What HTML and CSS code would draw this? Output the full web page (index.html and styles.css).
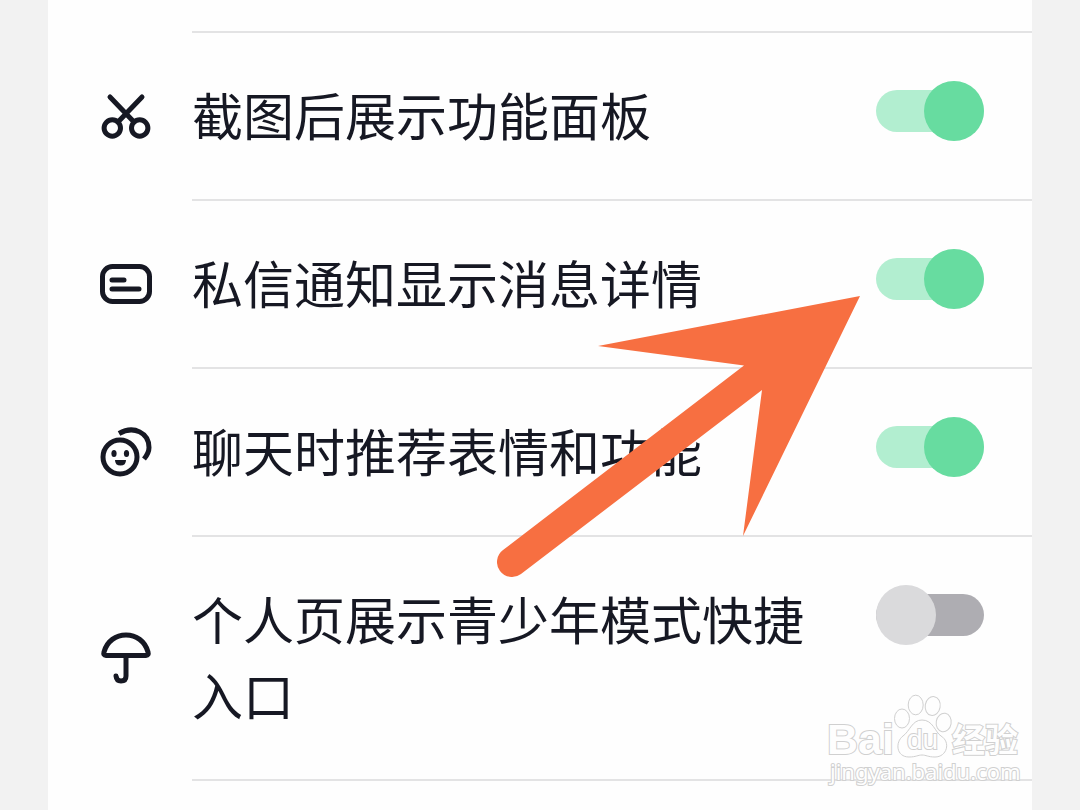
FILE: index.html
```html
<!DOCTYPE html>
<html lang="zh-CN">
<head>
<meta charset="utf-8">
<meta name="viewport" content="width=device-width, initial-scale=1">
<title>设置</title>
<link rel="stylesheet" href="styles.css">
</head>
<body>
<main class="panel">
  <ul class="settings">
    <li class="row">
      <svg class="icon" viewBox="0 0 56 56" aria-hidden="true"><path d="M12 9 36 34M44 9 20 34"/><circle cx="14.300" cy="40" r="8.200"/><circle cx="41.700" cy="40" r="8.200"/></svg>
      <div class="body">
        <label class="label" for="panel">截图后展示功能面板</label>
        <input class="switch" type="checkbox" role="switch" id="panel" checked>
      </div>
    </li>
    <li class="row">
      <svg class="icon" viewBox="0 0 56 56" aria-hidden="true"><rect x="4.500" y="9.500" width="47" height="35" rx="10"/><path d="M14 23H26M14 32H41"/></svg>
      <div class="body">
        <label class="label" for="detail">私信通知显示消息详情</label>
        <input class="switch" type="checkbox" role="switch" id="detail" checked>
      </div>
    </li>
    <li class="row">
      <svg class="icon" viewBox="0 0 56 56" aria-hidden="true"><circle cx="22" cy="32" r="17"/><path class="butt" d="M21 8.500C36 0 51 8 51 22.500Q51 28 46 34"/><g class="solid"><ellipse cx="16" cy="28.500" rx="2.600" ry="3.500"/><ellipse cx="28.500" cy="28.500" rx="2.600" ry="3.500"/><path d="M17 35H28Q28 40.500 22.500 40.500T17 35Z"/></g></svg>
      <div class="body">
        <label class="label" for="recommend">聊天时推荐表情和功能</label>
        <input class="switch" type="checkbox" role="switch" id="recommend" checked>
      </div>
    </li>
    <li class="row">
      <svg class="icon" viewBox="0 0 56 56" aria-hidden="true"><path d="M8 24.500Q5 24.500 6 21C9 10 18 4 28 4S47 10 50 21Q51 24.500 48 24.500ZM28 24.500V45Q28 50 23 50Q18.500 50 18 45"/></svg>
      <div class="body">
        <label class="label" for="teen">个人页展示青少年模式快捷入口</label>
        <input class="switch" type="checkbox" role="switch" id="teen">
      </div>
    </li>
  </ul>
  <svg class="arrow" viewBox="0 0 364 284" aria-hidden="true"><path d="M363 0 101 50 247 69.500 6 254A15 15 0 0 0 24 278L265 94 246 240Z"/></svg>
  <svg class="watermark" viewBox="0 0 204 100" role="img" aria-label="Baidu经验 jingyan.baidu.com">
    <text class="brand" x="5" y="63">Bai</text>
    <ellipse cx="80" cy="27.500" rx="7.500" ry="9.500"/><ellipse cx="93.700" cy="14" rx="7.500" ry="9.800"/><ellipse cx="110.700" cy="15" rx="7.500" ry="9.500" transform="rotate(10 110.700 15)"/><ellipse cx="121.700" cy="31.500" rx="7.500" ry="9.300" transform="rotate(10 121.700 31.500)"/>
    <path d="M100 29C111 29 113 41 119 45C129 51 125 66 113 66C106 66 104 64 100 64S94 66 87 66C74 66 73 51 81 45C88 40 90 29 100 29Z"/>
    <text class="du" x="85" y="58">du</text>
    <text class="cjk" x="130" y="61">经验</text>
    <text class="url" x="8" y="89">jingyan.baidu.com</text>
  </svg>
</main>
</body>
</html>
```
FILE: styles.css
```css
* { box-sizing: border-box; }
body {
  margin: 0;
  padding: 0 48px;
  background: #f2f2f2;
  color: #161823;
  font-family: "Noto Sans CJK SC", sans-serif;
}
.panel {
  position: relative;
  min-height: 100vh;
  padding-top: 31px;
  background: #fefefe;
  overflow: hidden;
}
.settings {
  margin: 0;
  padding: 0 0 0 50px;
  list-style: none;
}
.row {
  display: flex;
  align-items: center;
  gap: 38px;
}
.icon {
  flex: none;
  width: 56px;
  height: 56px;
  fill: none;
  stroke: #161823;
  stroke-width: 5;
  stroke-linecap: round;
  stroke-linejoin: round;
}
.butt { stroke-linecap: butt; }
.solid { fill: #161823; stroke: none; }
.body {
  flex: 1;
  display: flex;
  align-items: flex-start;
  justify-content: space-between;
  gap: 48px;
  padding: 43px 48px 47px 0;
  border-bottom: 2px solid #e3e3e4;
}
.row:first-child .body { border-top: 2px solid #e3e3e4; }
.label {
  font-size: 51px;
  line-height: 76px;
}
.switch {
  appearance: none;
  position: relative;
  flex: none;
  display: flex;
  align-items: center;
  width: 108px;
  height: 60px;
  margin: 5px 0 0;
}
.switch::before {
  content: "";
  width: 100%;
  height: 42px;
  border-radius: 21px;
  background: #aeadb2;
}
.switch::after {
  content: "";
  position: absolute;
  left: 0;
  top: 0;
  width: 60px;
  height: 60px;
  border-radius: 50%;
  background: #dadadc;
}
.switch:checked::before { background: #b2eed0; }
.switch:checked::after { left: auto; right: 0; background: #67dca0; }
.arrow {
  position: absolute;
  left: 449px;
  top: 296px;
  width: 364px;
  height: 284px;
  fill: #f76f41;
  pointer-events: none;
}
.watermark {
  position: absolute;
  right: 6px;
  top: 691px;
  width: 204px;
  height: 100px;
  fill: #fefefe;
  stroke: #d0d0d0;
  stroke-width: 1;
  pointer-events: none;
}
.watermark text { paint-order: stroke; stroke-width: 2px; }
.brand { font: bold 43px "Liberation Sans", sans-serif; }
.du { font: 28px "Liberation Sans", sans-serif; }
.cjk { font: bold 33px "Noto Sans CJK SC", sans-serif; }
.url { font: 22px "Noto Sans", sans-serif; }
```
